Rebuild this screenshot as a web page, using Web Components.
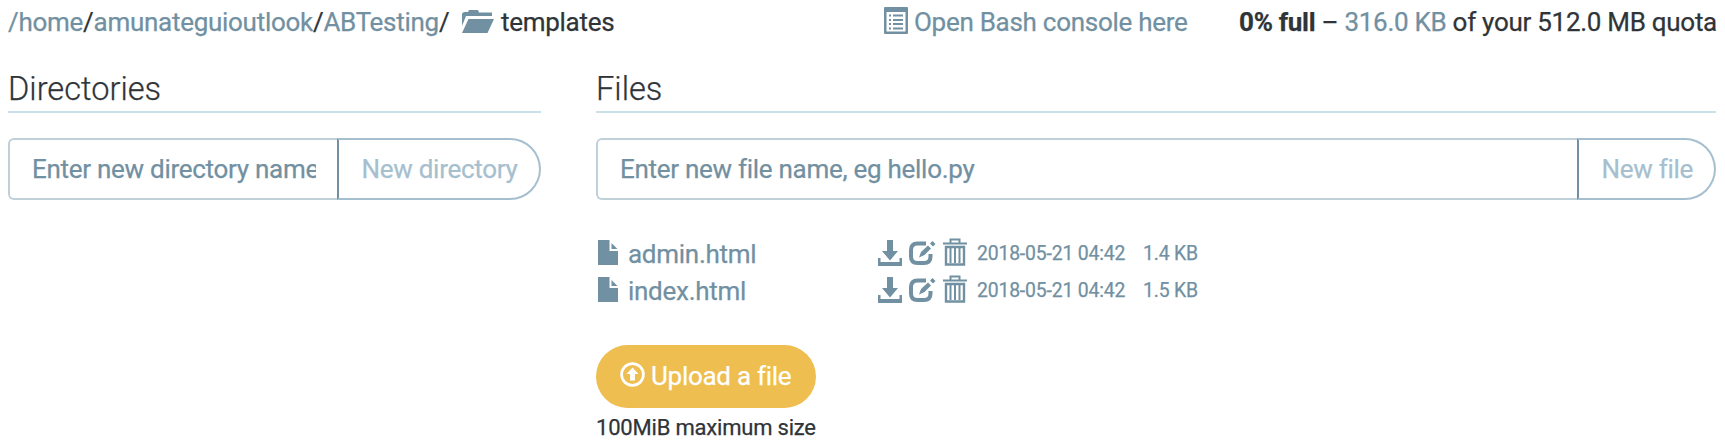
<!DOCTYPE html>
<html lang="en"><head><meta charset="utf-8"><title>Files</title>
<style>
html,body{margin:0;background:#fff}
body{font-family:Roboto,"Liberation Sans",sans-serif;font-size:26px;line-height:36px;letter-spacing:-.28px;-webkit-text-stroke:.25px;color:#2f3438;--link:#7190a1;--soft:#a6bfcf;width:1725px;height:443px;overflow:hidden}
</style></head><body>
<file-browser></file-browser>
<script>
const ICONS={
folder:[33,23,'<path d="M0 16V3.500l2-1.500h4l1-2h9l1 2.500h13v3.500H4z"/><path d="M6.500 9h25.500L25.500 23H0z"/>'],
console:[24,27,'<path fill-rule="evenodd" d="M1 0h22q1 0 1 1v25q0 1-1 1H1q-1 0-1-1V1q0-1 1-1zM2.500 5v19.500h19V5z"/><path d="M5 7.500h2v2H5zm4 0h10v2H9zM5 12h2v2H5zm4 0h10v2H9zM5 16h2v2H5zm4 0h10v2H9zM5 20.500h2v2H5zm4 0h10v2H9z"/>'],
file:[20,25,'<path d="M0 0h11.500v11H20v14H0z"/><path d="M13.500 3l6 6h-6z"/>'],
download:[24,26,'<path d="M9 0h6v11h5l-8 9.500L4 11h5z"/><path d="M0 18h2.500v4h19v-4H24v8H0z"/>'],
edit:[27,24,'<path d="M17 2.500H8.500Q2 2.500 2 9v6.500Q2 22 8.500 22H15q6.500 0 6.500-6.500V13" fill="none" stroke="currentColor" stroke-width="4"/><path d="M10 16.500l2-5.500 7-6.500 3 3L15.500 14zM21 2.500L23.500 0 26.500 3 24 5.500z"/>'],
trash:[24,28,'<path d="M0 5.500h24M7.500 5V1.500h9V5" fill="none" stroke="currentColor" stroke-width="2"/><path d="M3 9v17.500h18V9z" fill="none" stroke="currentColor" stroke-width="2.400"/><path d="M7.500 10v15M12 10v15M16.500 10v15" stroke="currentColor" stroke-width="2"/>'],
upload:[25,25,'<circle cx="12.500" cy="12.500" r="10.900" fill="none" stroke="currentColor" stroke-width="2.700"/><path d="M12.500 5.500l6 6.500h-3.600v6.500h-4.800V12H6.500z"/>']
};
function define(name,html,setup){
  customElements.define(name,class extends HTMLElement{
    connectedCallback(){
      if(this.shadowRoot)return;
      this.attachShadow({mode:'open'}).innerHTML=html;
      if(setup)setup(this,this.shadowRoot);
    }
  });
}
define('ui-icon','<style>:host{display:block;flex:none}svg{display:block;fill:currentColor}</style>',(el,root)=>{
  const [w,h,p]=ICONS[el.getAttribute('name')];
  root.innerHTML+=`<svg width="${w}" height="${h}" viewBox="0 0 ${w} ${h}">${p}</svg>`;
});
define('path-bar',`<style>
:host{display:flex;height:44px;padding:4px 0 0 8px;box-sizing:border-box;white-space:pre}
.crumbs{width:454px}a{color:var(--link)}
.folder{color:var(--link);padding-top:6px;width:39px}.here{width:383px}
.console{color:var(--link);width:30px;padding-top:3px}.open{width:325px}
b{font-weight:700}
</style><div class="crumbs"><a>/home</a>/<a>amunateguioutlook</a>/<a>ABTesting</a>/</div>
<ui-icon class="folder" name="folder"></ui-icon><span class="here">templates</span>
<ui-icon class="console" name="console"></ui-icon><a class="open">Open Bash console here</a>
<div class="quota"><b>0% full</b> – <a>316.0 KB</a> of your 512.0 MB quota</div>`);
define('section-title',`<style>:host{display:block;box-sizing:border-box;height:69px;padding-top:25px;border-bottom:2px solid #cbdfe9;font-weight:300;font-size:32.600px;letter-spacing:0;line-height:40px}</style><slot></slot>`);
define('create-form',`<style>
:host{display:flex;height:62px;margin-top:25px;box-sizing:border-box;line-height:60px}
.field{flex:1;min-width:0;box-sizing:border-box;border:2px solid #c0d0d9;border-right:0;border-radius:6px 0 0 6px;padding:0 21px 0 22px;line-height:58px;color:var(--link)}
.clip{overflow:hidden;white-space:nowrap}
.button{box-sizing:border-box;border:2px solid var(--soft);border-left-color:var(--link);border-radius:0 31px 31px 0;padding-left:22.500px;line-height:58px;color:var(--soft);white-space:nowrap}
</style><div class="field"><div class="clip"><slot></slot></div></div><div class="button"></div>`,(el,root)=>{
  const b=root.querySelector('.button');b.textContent=el.getAttribute('action');b.style.width=el.getAttribute('button-width')+'px';
});
define('file-row',`<style>
:host{display:flex;height:36.500px;color:var(--link);white-space:pre}
.file{padding-top:1px;width:30px}.name{width:250px;line-height:31px}
.d{width:31px;padding-top:1px}.e{width:34px;padding-top:2px}.t{width:34px;margin-top:-1px}
.date{width:166px}.date,.size{font-size:19.400px;letter-spacing:-.18px;line-height:30px}
</style><ui-icon class="file" name="file"></ui-icon><span class="name"><slot></slot></span>
<ui-icon class="d" name="download"></ui-icon><ui-icon class="e" name="edit"></ui-icon><ui-icon class="t" name="trash"></ui-icon>
<span class="date"></span><span class="size"></span>`,(el,root)=>{
  root.querySelector('.date').textContent=el.getAttribute('date');
  root.querySelector('.size').textContent=el.getAttribute('size');
});
define('upload-box',`<style>
:host{display:block;margin-top:33px;width:220px}
.button{height:63px;box-sizing:border-box;border-radius:32px;background:#eebe50;color:#fff;display:flex;padding-left:24px;line-height:63px;white-space:nowrap}
ui-icon{padding-top:17px;width:31px}
.note{font-size:22px;letter-spacing:-.2px;line-height:30px;padding:5px 0 0;white-space:nowrap}
</style><div class="button"><ui-icon name="upload"></ui-icon><span>Upload a file</span></div><div class="note"><slot></slot></div>`);
define('file-browser',`<style>
:host{display:block}
main{display:grid;grid-template-columns:533px 1120px;column-gap:55px;padding-left:8px}
.rows{padding:39px 0 0 2px}
</style><path-bar></path-bar><main>
<section><section-title>Directories</section-title><create-form action="New directory" button-width="204">Enter new directory name</create-form></section>
<section><section-title>Files</section-title><create-form action="New file" button-width="139">Enter new file name, eg hello.py</create-form>
<div class="rows"><file-row date="2018-05-21 04:42" size="1.4 KB">admin.html</file-row><file-row date="2018-05-21 04:42" size="1.5 KB">index.html</file-row></div>
<upload-box>100MiB maximum size</upload-box></section></main>`);
</script></body></html>
